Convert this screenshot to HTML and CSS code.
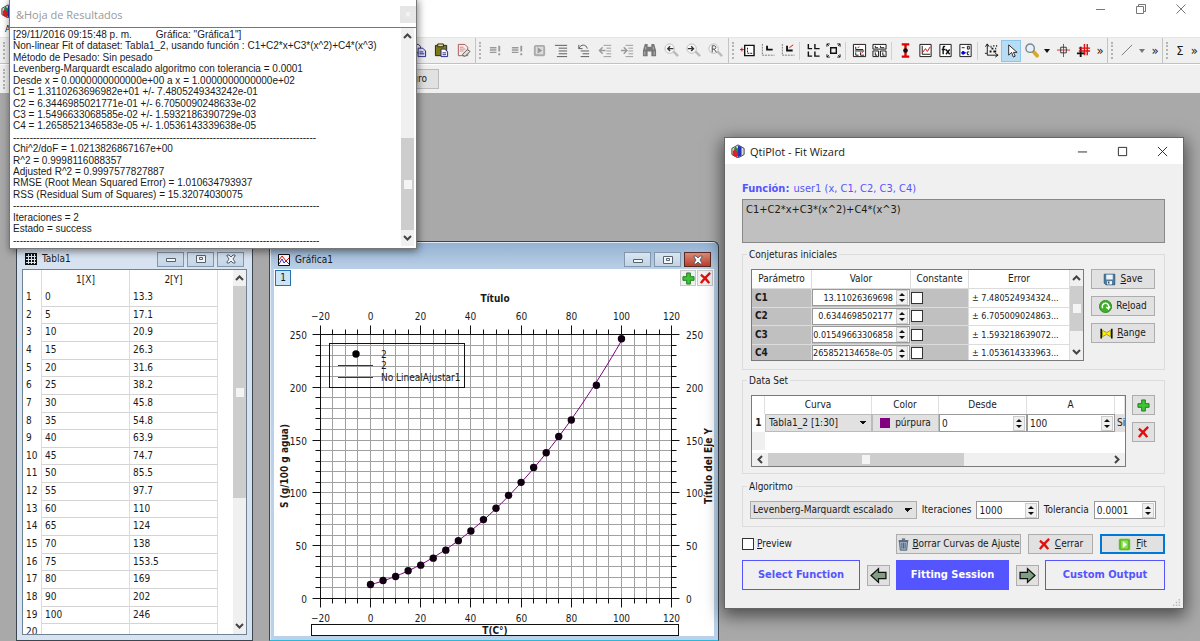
FILE: index.html
```html
<!DOCTYPE html>
<html lang="es">
<head>
<meta charset="utf-8">
<title>QtiPlot - Fit Wizard</title>
<link rel="stylesheet" href="styles.css">
</head>
<body>
<div class="app">
  <header class="app-title">
    <div class="app-brand">
      <svg class="logo" viewBox="0 0 16 16"><path d="M1 5l7-4 7 4v7l-7 4-7-4z" fill="#ddd" stroke="#333"/><path d="M2 8l3-2 3 2v6l-2 1-4-2z" fill="#d22"/><path d="M8 2l4 1v10l-4 2z" fill="#2233bb"/><path d="M3 6l2-3 3 2v4z" fill="#2a8a3a"/></svg>
      <span class="app-menu">A</span>
    </div>
    <div class="app-controls">
      <button aria-label="Minimizar"><svg viewBox="0 0 12 12"><path d="M1 6.500h9"/></svg></button>
      <button aria-label="Restaurar"><svg viewBox="0 0 12 12"><path d="M1.500 3.500h7v7h-7zM3.500 3.500v-2h7v7h-2"/></svg></button>
      <button aria-label="Cerrar"><svg viewBox="0 0 12 12"><path d="M1.500 1.500l9 9M10.500 1.500l-9 9"/></svg></button>
    </div>
  </header>

  <div class="toolbar">
    <div class="group group-edit">
      <span class="handle"></span>
      <span class="spring"></span>
      <button aria-label="Copiar"><svg viewBox="0 0 16 16"><path d="M1 1.500h6l2 2v7H1z" fill="#eef" stroke="#226"/><path d="M6.500 5.500h5l3 3v6h-8z" fill="#dde" stroke="#22228a"/><path d="M8 9.500h4M8 11.500h5" stroke="#22228a"/></svg></button>
      <button aria-label="Pegar"><svg viewBox="0 0 16 16"><path d="M1.500 2.500h12v11h-12z" fill="#7a7a1a" stroke="#222"/><path d="M4 1h6v3H4z" fill="#e8e070" stroke="#222"/><path d="M7.500 6.500h4l3 3v5h-7z" fill="#fff" stroke="#22228a"/><path d="M9 10.500h4M9 12.500h4" stroke="#22228a"/></svg></button>
      <button aria-label="Borrar"><svg viewBox="0 0 16 16"><path d="M2.500 1.500h7l3 3v9h-10z" fill="#fbeaea" stroke="#a55"/><path d="M4 4.500h4M4 6.500h6M4 8.500h4" stroke="#c88"/><path d="M7 12l5-5 3 2-5 5H8z" fill="#ddd" stroke="#555"/></svg></button>
    </div>
    <div class="group group-script">
      <span class="handle"></span>
      <button aria-label="Ejecutar línea"><svg class="dim" viewBox="0 0 16 16"><path d="M2 5h7M2 7.500h7M2 10h7" stroke-width="1.500"/><path d="M12 3v6M12 11v2" stroke-width="2"/></svg></button>
      <button aria-label="Ejecutar todo"><svg class="dim" viewBox="0 0 16 16"><path d="M2 5h7M2 7.500h7M2 10h7" stroke-width="1.500"/><path d="M12 3v6M12 11v2" stroke-width="2"/></svg></button>
      <button aria-label="Reproducir"><svg viewBox="0 0 16 16"><rect x="2" y="2" width="12" height="12" rx="2" fill="#aaa"/><rect x="4" y="4" width="8" height="8" fill="#ddd"/><path d="M6 4.500l5 3.500-5 3.500z" fill="#999"/></svg></button>
      <button aria-label="Comentar"><svg class="dark" viewBox="0 0 16 16"><path d="M1 2.500h13M5 5.500h9M5 8.500h9M5 11.500h9M3 14.500h11"/></svg></button>
      <button aria-label="Descomentar"><svg class="dark" viewBox="0 0 16 16"><path d="M3 2v4h4M3 6c2-5 8-5 9 0M5 8.500h9M7 11.500h7M5 14.500h9"/></svg></button>
      <button aria-label="Reducir sangría"><svg class="dim" viewBox="0 0 16 16"><path d="M6 2.500h8M9 5.500h5M9 8.500h5M9 11.500h5M6 14.500h8"/><path d="M5 4.500L1.500 8 5 11.500M2 8h6" stroke-width="1.500"/></svg></button>
      <button aria-label="Aumentar sangría"><svg class="dim" viewBox="0 0 16 16"><path d="M6 2.500h8M9 5.500h5M9 8.500h5M9 11.500h5M6 14.500h8"/><path d="M4 4.500L7.500 8 4 11.500M1 8h6" stroke-width="1.500"/></svg></button>
      <button aria-label="Buscar"><svg viewBox="0 0 16 16"><path d="M3 1h3v3h4V1h3l2 7v6h-5V9H6v5H1V8z" fill="#777"/><path d="M4 4v3M12 4v3M3 9v4M13 9v4" stroke="#bbb"/></svg></button>
      <button aria-label="Buscar anterior"><svg class="dim" viewBox="0 0 16 16"><circle cx="6" cy="6" r="5" fill="#f8f8f8" stroke="#bbb"/><path d="M10 9l5 5" stroke-width="2.500" stroke="#bbb"/><path d="M10 6H4M6.500 3.500L4 6l2.500 2.500" stroke="#333" stroke-width="1.500"/></svg></button>
      <button aria-label="Buscar siguiente"><svg class="dim" viewBox="0 0 16 16"><circle cx="6" cy="6" r="5" fill="#f8f8f8" stroke="#bbb"/><path d="M10 9l5 5" stroke-width="2.500" stroke="#bbb"/><path d="M2 6h6M5.500 3.500L8 6 5.500 8.500" stroke="#333" stroke-width="1.500"/></svg></button>
      <button aria-label="Reemplazar"><svg class="dim" viewBox="0 0 16 16"><circle cx="6" cy="6" r="5" fill="#f8f8f8" stroke="#bbb"/><path d="M10 9l5 5" stroke-width="2.500" stroke="#bbb"/><path d="M4.500 10V3H7a1.800 1.800 0 010 3.500H4.500M6.500 6.500L9 10" stroke="#444"/></svg></button>
    </div>
    <div class="group group-plot">
      <span class="handle"></span>
      <button aria-label="Añadir capa"><svg viewBox="0 0 16 16"><path d="M5 2.500h10v11H5z" fill="#fff" stroke="#111" stroke-width="1.500"/><path d="M8 5v6h5" fill="none" stroke="#111" stroke-dasharray="2 1"/><path d="M0 7h4M2 5v4" stroke="#d00"/></svg></button>
      <button aria-label="Capa izquierda"><svg class="ink" viewBox="0 0 16 16"><path d="M2.500 1v12h13" stroke="#777" stroke-dasharray="2 1"/><path d="M7.500 3v4h6" stroke-width="2"/></svg></button>
      <button aria-label="Capa derecha"><svg class="ink" viewBox="0 0 16 16"><path d="M2.500 1v12h13" stroke="#777" stroke-dasharray="2 1"/><path d="M7.500 3v5h6" stroke-width="2"/><path d="M10 5l4-3" stroke="#d00"/></svg></button>
      <i class="sep"></i>
      <button aria-label="Organizar capas"><svg class="ink" viewBox="0 0 16 16"><path d="M2.500 1v5h4M9.500 1v5h5M2.500 9v5h4M9.500 9v5h5" stroke-width="1.500"/></svg></button>
      <button aria-label="Ajustar tamaño"><svg class="ink" viewBox="0 0 16 16"><path d="M5 5h6v6H5z" stroke-width="1.500"/><path d="M1 4V1h3M12 1h3v3M15 12v3h-3M4 15H1v-3"/><path d="M1 1l2 2M15 1l-2 2M15 15l-2-2M1 15l2-2"/></svg></button>
      <i class="sep"></i>
      <button aria-label="Dos paneles"><svg class="ink" viewBox="0 0 16 16"><path d="M1.500 1.500h13v13h-13z" fill="#fff"/><path d="M4 4v3h8M4 10v3h3M9 10v3h4M3 8.500h10"/><path d="M6 5l2-1M10 11l2-2" stroke="#d00"/></svg></button>
      <button aria-label="Cuatro paneles"><svg class="ink" viewBox="0 0 16 16"><path d="M1 1.500h14v5H1zM1 8.500h6v6H1zM9 8.500h6v6H9z" fill="#fff"/><path d="M3.500 3v2h3M9 3v2h4M3.500 10v3h2M11.500 10v3h2"/></svg></button>
      <i class="sep"></i>
      <button aria-label="Barras de error"><svg viewBox="0 0 16 16"><path d="M4 1.500h8M4 14.500h8M8 1v14" stroke="#e00000" stroke-width="2.500"/><circle cx="8" cy="8" r="2.500" fill="#111"/></svg></button>
      <button aria-label="Curvas"><svg class="ink" viewBox="0 0 16 16"><path d="M2 1.500h12v13H2z" fill="#fff"/><path d="M4.500 3v9H13"/><path d="M5 10l3-4 2 3 3-5" stroke="#d00"/></svg></button>
      <button aria-label="Función"><svg class="ink" viewBox="0 0 16 16"><path d="M2 1.500h12v13H2z" fill="#fff"/><path d="M7.500 4c-2-1-2 1-2 3v5M4 7h4M8.500 7l4 5M12.500 7l-4 5" stroke-width="1.500"/></svg></button>
      <button aria-label="Leyenda"><svg class="ink" viewBox="0 0 16 16"><path d="M2 1.500h12v13H2z" fill="#fff"/><path d="M4 5h3M10 3.500h2v3h-2zM12 9.500h-2v3h2"/><circle cx="5.500" cy="10.500" r="1.500" fill="#00d" stroke="#00d"/><path d="M4 10.500h5" stroke="#00d"/></svg></button>
      <i class="sep"></i>
      <button aria-label="Seleccionar datos"><svg class="ink" viewBox="0 0 16 16"><path d="M3.500 1v12H15M1.500 4l2-3 2 3M12 11l3 2-3 2M1 11h2"/><path d="M7 4h1M10 3h1M8 6h2M12 6h1M6 9h2M10 9h3M13 3h1" stroke-width="2"/></svg></button>
      <button class="active" aria-label="Puntero"><svg viewBox="0 0 16 16"><path d="M5 2v11l3-3 2 5 2-1-2-4h4z" fill="#fff" stroke="#222"/></svg></button>
      <button aria-label="Ampliar"><svg viewBox="0 0 16 16"><path d="M10 9l4 4.500" stroke="#d8a928" stroke-width="4" stroke-linecap="round"/><circle cx="6.500" cy="5.500" r="4.500" fill="#e4f0fa" stroke="#7d8790" stroke-width="1.500"/></svg></button>
      <span class="caret"></span>
      <button aria-label="Lector de datos"><svg viewBox="0 0 16 16"><path d="M8 1v14M1 7.500h14" stroke="#d22"/><path d="M5 4.500h6v6H5z" fill="none" stroke="#333"/></svg></button>
      <button aria-label="Lector de pantalla"><svg viewBox="0 0 16 16"><path d="M5 4v11M1 11h9" stroke="#111" stroke-width="2"/><path d="M9 1v12M12 1v12M3 5.500h12M3 8.500h12" stroke="#d11" stroke-width="1.500"/></svg></button>
      <span class="more">»</span>
    </div>
    <div class="group">
      <span class="handle"></span>
      <button aria-label="Línea"><svg viewBox="0 0 16 16"><path d="M3 13L14 2" stroke="#777"/></svg></button>
      <span class="caret soft"></span>
      <span class="more">»</span>
    </div>
    <div class="group group-stats">
      <span class="handle"></span>
      <button class="sigma" aria-label="Estadísticas">Σ</button>
      <span class="more">»</span>
    </div>
  </div>

  <div class="toolbar format-bar">
    <span class="handle"></span>
    <button class="color-name">Negro</button>
  </div>

  <main class="desktop"></main>

  <section class="sub-window table-window">
    <header class="sub-title">
      <svg class="sub-icon" viewBox="0 0 12 12"><path d="M0 0h12v12H0z" fill="#111"/><path d="M1 3.500h10M1 6.500h10M1 9.500h10M3.500 1v10M6.500 1v10M9.500 1v10" stroke="#dde6f0"/></svg>
      <h2>Tabla1</h2>
      <button aria-label="Minimizar"><svg viewBox="0 0 12 10"><path d="M1.500 4.500h9v3h-9z"/></svg></button>
      <button aria-label="Maximizar"><svg viewBox="0 0 12 10"><path d="M1.500 1.500h9v7h-9zM4.500 3.500h3v2h-3z"/></svg></button>
      <button aria-label="Cerrar"><svg viewBox="0 0 12 10"><path d="M2 1h2l2 2 2-2h2v1L8 5l2 3v1H8L6 7 4 9H2V8l2-3-2-3z"/></svg></button>
    </header>
    <div class="sheet">
      <table class="data">
        <thead><tr><th></th><th>1[X]</th><th>2[Y]</th></tr></thead>
        <tbody>
          <tr><th>1</th><td>0</td><td>13.3</td></tr>
          <tr><th>2</th><td>5</td><td>17.1</td></tr>
          <tr><th>3</th><td>10</td><td>20.9</td></tr>
          <tr><th>4</th><td>15</td><td>26.3</td></tr>
          <tr><th>5</th><td>20</td><td>31.6</td></tr>
          <tr><th>6</th><td>25</td><td>38.2</td></tr>
          <tr><th>7</th><td>30</td><td>45.8</td></tr>
          <tr><th>8</th><td>35</td><td>54.8</td></tr>
          <tr><th>9</th><td>40</td><td>63.9</td></tr>
          <tr><th>10</th><td>45</td><td>74.7</td></tr>
          <tr><th>11</th><td>50</td><td>85.5</td></tr>
          <tr><th>12</th><td>55</td><td>97.7</td></tr>
          <tr><th>13</th><td>60</td><td>110</td></tr>
          <tr><th>14</th><td>65</td><td>124</td></tr>
          <tr><th>15</th><td>70</td><td>138</td></tr>
          <tr><th>16</th><td>75</td><td>153.5</td></tr>
          <tr><th>17</th><td>80</td><td>169</td></tr>
          <tr><th>18</th><td>90</td><td>202</td></tr>
          <tr><th>19</th><td>100</td><td>246</td></tr>
          <tr><th>20</th><td></td><td></td></tr>
        </tbody>
      </table>
      <div class="scroll"><svg viewBox="0 0 9 6"><path d="M1 5l3.500-3.500L8 5"/></svg><div class="track"><span class="thumb thumb-sheet"><b></b></span></div><svg viewBox="0 0 9 6"><path d="M1 1l3.500 3.500L8 1"/></svg></div>
    </div>
  </section>

  <section class="sub-window graph-window">
    <header class="sub-title">
      <svg class="sub-icon" viewBox="0 0 12 12"><path d="M.5.500h11v11H.5z" fill="#fff" stroke="#111"/><path d="M1 6l3-4 4 5 3-3" fill="none" stroke="#d11"/><path d="M1 10l3-5 2 4 2-2 3 3" fill="none" stroke="#33b"/></svg>
      <h2>Gráfica1</h2>
      <button aria-label="Minimizar"><svg viewBox="0 0 12 10"><path d="M1.500 4.500h9v3h-9z"/></svg></button>
      <button aria-label="Maximizar"><svg viewBox="0 0 12 10"><path d="M1.500 1.500h9v7h-9zM4.500 3.500h3v2h-3z"/></svg></button>
      <button class="danger" aria-label="Cerrar"><svg viewBox="0 0 12 10"><path d="M2 1h2l2 2 2-2h2v1L8 5l2 3v1H8L6 7 4 9H2V8l2-3-2-3z"/></svg></button>
    </header>
    <div class="graph">
      <div class="layers">
        <button class="layer">1</button>
        <button class="tool" aria-label="Añadir capa"><svg viewBox="0 0 14 14"><path d="M5 1h4v4h4v4H9v4H5V9H1V5h4z" fill="#3cc433" stroke="#1c7a1c"/></svg></button>
        <button class="tool" aria-label="Eliminar capa"><svg viewBox="0 0 14 14"><path d="M2 3c3 2 7 6 9 9M12 1C9 4 5 8 2 12" fill="none" stroke="#e01010" stroke-width="2.500"/></svg></button>
      </div>
      <svg class="chart" id="chart" viewBox="0 0 440 349" role="img" aria-label="Título"></svg>
    </div>
  </section>

  <section class="results">
    <header class="results-title"><h2>&amp;Hoja de Resultados</h2><button aria-label="Cerrar">×</button></header>
    <div class="results-body">
      <div class="log">
        <p>[29/11/2016 09:15:48 p. m.<span class="tab"></span>Gráfica: "Gráfica1"]</p>
        <p>Non-linear Fit of dataset: Tabla1_2, usando función : C1+C2*x+C3*(x^2)+C4*(x^3)</p>
        <p>Método de Pesado: Sin pesado</p>
        <p>Levenberg-Marquardt escalado algoritmo con tolerancia = 0.0001</p>
        <p>Desde x = 0.0000000000000e+00 a x = 1.0000000000000e+02</p>
        <p>C1 = 1.3110263696982e+01 +/- 7.4805249343242e-01</p>
        <p>C2 = 6.3446985021771e-01 +/- 6.7050090248633e-02</p>
        <p>C3 = 1.5496633068585e-02 +/- 1.5932186390729e-03</p>
        <p>C4 = 1.2658521346583e-05 +/- 1.0536143339638e-05</p>
        <p>-------------------------------------------------------------------------------------------</p>
        <p>Chi^2/doF = 1.0213826867167e+00</p>
        <p>R^2 = 0.9998116088357</p>
        <p>Adjusted R^2 = 0.9997577827887</p>
        <p>RMSE (Root Mean Squared Error) = 1.010634793937</p>
        <p>RSS (Residual Sum of Squares) = 15.32074030075</p>
        <p>--------------------------------------------------------------------------------------------</p>
        <p>Iteraciones = 2</p>
        <p>Estado = success</p>
        <p>--------------------------------------------------------------------------------------------</p>
      </div>
      <div class="scroll"><svg viewBox="0 0 9 6"><path d="M1 5l3.500-3.500L8 5"/></svg><div class="track track-end"><span class="thumb thumb-log"><b></b></span></div><svg viewBox="0 0 9 6"><path d="M1 1l3.500 3.500L8 1"/></svg></div>
    </div>
  </section>

  <section class="wizard" role="dialog" aria-label="QtiPlot - Fit Wizard">
    <header class="wizard-title">
      <svg class="logo" viewBox="0 0 16 16"><path d="M1 5l7-4 7 4v7l-7 4-7-4z" fill="#ddd" stroke="#333"/><path d="M2 8l3-2 3 2v6l-2 1-4-2z" fill="#d22"/><path d="M8 2l4 1v10l-4 2z" fill="#2233bb"/><path d="M3 6l2-3 3 2v4z" fill="#2a8a3a"/></svg>
      <h1>QtiPlot - Fit Wizard</h1>
      <button aria-label="Minimizar"><svg viewBox="0 0 12 12"><path d="M1 6.500h10"/></svg></button>
      <button aria-label="Maximizar"><svg viewBox="0 0 12 12"><path d="M1.500 1.500h9v9h-9z"/></svg></button>
      <button aria-label="Cerrar"><svg viewBox="0 0 12 12"><path d="M1 1l10 10M11 1L1 11"/></svg></button>
    </header>
    <div class="wizard-body">
      <p class="function"><strong>Función:</strong> <span>user1 (x, C1, C2, C3, C4)</span></p>
      <textarea class="formula" aria-label="Función" readonly>C1+C2*x+C3*(x^2)+C4*(x^3)</textarea>

      <div class="box box-guess" role="group" aria-labelledby="lg-guess">
        <h3 id="lg-guess">Conjeturas iniciales</h3>
        <div class="grid-frame guess-frame">
          <table class="guess">
            <thead><tr><th>Parámetro</th><th>Valor</th><th>Constante</th><th>Error</th></tr></thead>
            <tbody>
              <tr><th>C1</th><td><span class="spin"><input class="num" aria-label="C1" value="13.11026369698"><i class="arrows"></i></span></td><td><input type="checkbox" aria-label="C1 constante"></td><td class="err">± 7.480524934324...</td></tr>
              <tr><th>C2</th><td><span class="spin"><input class="num" aria-label="C2" value="0.6344698502177"><i class="arrows"></i></span></td><td><input type="checkbox" aria-label="C2 constante"></td><td class="err">± 6.705009024863...</td></tr>
              <tr><th>C3</th><td><span class="spin"><input class="num" dir="rtl" aria-label="C3" value="0.01549663306858"><i class="arrows"></i></span></td><td><input type="checkbox" aria-label="C3 constante"></td><td class="err">± 1.593218639072...</td></tr>
              <tr><th>C4</th><td><span class="spin"><input class="num" dir="rtl" aria-label="C4" value="1.265852134658e-05"><i class="arrows"></i></span></td><td><input type="checkbox" aria-label="C4 constante"></td><td class="err">± 1.053614333963...</td></tr>
            </tbody>
          </table>
          <div class="scroll"><svg viewBox="0 0 9 6"><path d="M1 5l3.500-3.500L8 5"/></svg><div class="track"><span class="thumb thumb-guess"><b></b></span></div><svg viewBox="0 0 9 6"><path d="M1 1l3.500 3.500L8 1"/></svg></div>
        </div>
        <div class="side">
          <button class="btn"><svg viewBox="0 0 16 16"><path d="M1.500 1.500h13v13h-11l-2-2z" fill="#4b7fa8" stroke="#2b4f70"/><path d="M4 2h8v6H4z" fill="#eef4f8"/><path d="M5 10h6v4H5z" fill="#fff"/><path d="M6 10.500h2V13H6z" fill="#345"/></svg><span><u>S</u>ave</span></button>
          <button class="btn"><svg viewBox="0 0 16 16"><circle cx="8" cy="8" r="7.500" fill="#3fb028" stroke="#237a14"/><path d="M4.500 10a4 4 0 117 0M9 8.500l2.500 2.500 2-3" fill="none" stroke="#fff" stroke-width="1.800"/></svg><span>Re<u>l</u>oad</span></button>
          <button class="btn"><svg viewBox="0 0 16 16"><path d="M1.500 2v12M14.500 2v12" stroke="#111" stroke-width="2"/><path d="M3 4l5 3 5-3v8L8 9l-5 3z" fill="#ffee00" stroke="#998c00"/></svg><span><u>R</u>ange</span></button>
        </div>
      </div>

      <div class="box box-data" role="group" aria-labelledby="lg-data">
        <h3 id="lg-data">Data Set</h3>
        <div class="grid-frame set-frame">
          <table class="sets">
            <thead><tr><th></th><th>Curva</th><th>Color</th><th>Desde</th><th>A</th><th></th></tr></thead>
            <tbody>
              <tr><th>1</th>
                <td><select aria-label="Curva"><option>Tabla1_2 [1:30]</option></select></td>
                <td><button class="swatch"><i></i>púrpura</button></td>
                <td><span class="spin"><input aria-label="Desde" value="0"><i class="arrows"></i></span></td>
                <td><span class="spin"><input aria-label="A" value="100"><i class="arrows"></i></span></td>
                <td class="cut">Si</td></tr>
              <tr class="empty"><th></th><td></td></tr>
            </tbody>
          </table>
          <div class="scroll scroll-x"><svg viewBox="0 0 6 9"><path d="M5 1L1.500 4.500 5 8"/></svg><div class="track"><span class="thumb thumb-sets"><b></b></span></div><svg viewBox="0 0 6 9"><path d="M1 1l3.500 3.500L1 8"/></svg></div>
        </div>
        <div class="side side-small">
          <button class="btn" aria-label="Añadir"><svg viewBox="0 0 14 14"><path d="M5 1h4v4h4v4H9v4H5V9H1V5h4z" fill="#3cc433" stroke="#1c7a1c"/></svg></button>
          <button class="btn" aria-label="Quitar"><svg viewBox="0 0 14 14"><path d="M2 3c3 2 7 6 9 9M12 1C9 4 5 8 2 12" fill="none" stroke="#e01010" stroke-width="2.500"/></svg></button>
        </div>
      </div>

      <div class="box box-algo" role="group" aria-labelledby="lg-algo">
        <h3 id="lg-algo">Algoritmo</h3>
        <select class="algo" aria-label="Algoritmo"><option>Levenberg-Marquardt escalado</option></select>
        <label for="iter">Iteraciones</label>
        <span class="spin framed"><input id="iter" value="1000"><i class="arrows"></i></span>
        <label for="tol">Tolerancia</label>
        <span class="spin framed"><input id="tol" value="0.0001"><i class="arrows"></i></span>
      </div>

      <div class="actions">
        <label class="preview"><input type="checkbox"><span><u>P</u>review</span></label>
        <button class="btn btn-clear"><svg viewBox="0 0 16 16"><path d="M3 4h10l-1 11H4z" fill="#9db0c4" stroke="#44546a"/><path d="M2 3.500h12M6 1.500h4" stroke="#44546a" stroke-width="1.500"/><path d="M6 6v7M8 6v7M10 6v7" stroke="#44546a"/></svg><span><u>B</u>orrar Curvas de Ajuste</span></button>
        <button class="btn btn-close"><svg viewBox="0 0 14 14"><path d="M2 3c3 2 7 6 9 9M12 1C9 4 5 8 2 12" fill="none" stroke="#e01010" stroke-width="2.500"/></svg><span><u>C</u>errar</span></button>
        <button class="btn btn-fit"><svg viewBox="0 0 16 16"><rect x="1" y="1" width="14" height="14" rx="2" fill="#5cc020"/><rect x="4" y="3" width="8" height="10" rx="1" fill="#8fe05a"/><path d="M6 4l5 4-5 4z" fill="#fff"/></svg><span><u>F</u>it</span></button>
      </div>
      <nav class="steps">
        <button class="step step-first">Select Function</button>
        <button class="btn nav" aria-label="Anterior"><svg viewBox="0 0 16 16"><path d="M1 8l7-6.500V5h7v6H8v3.500z" fill="#7fa07f" stroke="#111" stroke-width="1.200"/></svg></button>
        <button class="step current">Fitting Session</button>
        <button class="btn nav" aria-label="Siguiente"><svg viewBox="0 0 16 16"><path d="M15 8L8 1.500V5H1v6h7v3.500z" fill="#7fa07f" stroke="#111" stroke-width="1.200"/></svg></button>
        <button class="step step-last">Custom Output</button>
      </nav>
      <svg class="grip" viewBox="0 0 10 10"><path d="M8 0h2v2H8zM4 4h2v2H4zM8 4h2v2H8zM0 8h2v2H0zM4 8h2v2H4zM8 8h2v2H8z" fill="#bbb"/></svg>
    </div>
  </section>
</div>
<script src="chart.js"></script>
</body>
</html>
```

FILE: styles.css
```css
:root {
  --ui: "DejaVu Sans Condensed", "DejaVu Sans", "Noto Sans", sans-serif;
  --face: #f0f0f0;
  --button: #e1e1e1;
  --line: #adadad;
  --accent: #5555ff;
}

* { box-sizing: border-box; }

body {
  margin: 0;
  background: #a9a9a9;
  color: #1a1a1a;
  font: 9px/12px var(--ui);
}

h1, h2, h3, p { margin: 0; font-size: 10px; font-weight: normal; }
button, input, select, textarea { font: inherit; color: inherit; margin: 0; padding: 0; border-radius: 0; }
button { border: 0; background: none; }
u { text-underline-offset: 1px; }

.app { position: relative; display: flex; flex-direction: column; height: 100vh; overflow: hidden; }
.logo { width: 14px; height: 14px; flex: none; }

/* Main window */
.app-title { display: flex; justify-content: space-between; height: 37px; background: #fff; }
.app-brand { display: flex; flex-direction: column; gap: 5px; padding: 4px 0 0 1px; }
.app-menu { padding-left: 4px; }
.app-controls { display: flex; gap: 28px; align-items: center; height: 18px; padding-right: 13px; }
.app-controls svg { display: block; width: 12px; height: 12px; fill: none; stroke: #777; }

.toolbar { display: flex; align-items: stretch; height: 27px; background: var(--face); border-top: 1px solid #e4e4e4; border-bottom: 1px solid #c2c2c2; }
.group { display: flex; align-items: center; border-left: 1px solid #c4c4c4; }
.group-edit { width: 475px; border-left: 0; padding-right: 1px; }
.group-script { padding-right: 2px; }
.group-stats { flex: 1; overflow: hidden; }
.spring { flex: 1; }
.toolbar button { display: flex; align-items: center; justify-content: center; width: 20px; height: 22px; }
.toolbar .group-script button, .toolbar .group-edit button { width: 22px; }
.toolbar svg { width: 15px; height: 15px; flex: none; fill: none; }
.toolbar .dim { stroke: #999; }
.toolbar .dark { stroke: #555; }
.toolbar .ink { stroke: #111; }
.toolbar .active { background: #b9dcf5; border: 1px solid #8cc4ec; }
.handle { flex: none; width: 2px; margin: 4px 3px; align-self: stretch; border-left: 2px dotted #b4b4b4; }
.sep { width: 1px; height: 18px; margin: 0 3px 0 2px; background: #d0d0d0; }
.caret { display: flex; justify-content: center; width: 12px; color: #111; }
.caret::before { content: ""; border: 3px solid transparent; border-top: 4px solid; border-top-color: currentColor; border-bottom: 0; }
.caret.soft { color: #777; }
.more { width: 14px; text-align: center; font-size: 13px; }
.toolbar .sigma { width: 22px; font-size: 13px; }
.format-bar { height: 29px; align-items: center; border-top-color: #fff; border-bottom: 0; }
.toolbar .color-name { justify-content: flex-end; width: 60px; height: 20px; margin-left: 371px; padding-right: 11px; background: var(--button); border: 1px solid #bbb; font-size: 10px; }
.desktop { flex: 1; background: #a9a9a9; }

/* Scroll bars */
.scroll { display: flex; flex-direction: column; align-items: center; flex: none; width: 13px; background: var(--face); }
.scroll svg { flex: none; width: 9px; height: 6px; margin: 5px 0; fill: none; stroke: #444; stroke-width: 2; }
.track { display: flex; flex-direction: column; flex: 1; align-self: stretch; }
.track-end { justify-content: flex-end; }
.thumb { display: flex; align-items: center; justify-content: center; background: #cdcdcd; }
.thumb b { width: 8px; height: 9px; background: #f4f4f4; }
.thumb-sheet { height: 212px; }
.thumb-log { height: 92px; }
.thumb-guess { height: 45px; }
.scroll-x { flex-direction: row; width: auto; height: 13px; }
.scroll-x svg { width: 6px; height: 9px; margin: 0 5px; }
.scroll-x .track { flex-direction: row; }
.thumb-sets { width: 196px; }

/* Inner windows */
.sub-window { position: absolute; display: flex; flex-direction: column; border: 1px solid #3c4650; }
.sub-title { display: flex; align-items: center; gap: 3px; height: 20px; flex: none; }
.sub-title h2 { flex: 1; }
.sub-icon { width: 12px; height: 12px; margin-right: 2px; }
.sub-title button { display: flex; align-items: center; justify-content: center; width: 27px; height: 15px; border: 1px solid #8296ac; background: linear-gradient(#d9e5f1, #c3d4e6); }
.sub-title button svg { width: 12px; height: 10px; fill: #f4f8fb; stroke: #56636f; }
.sub-title .danger { background: linear-gradient(#dc8a78, #b8402c); border-color: #5a2a22; }
.sub-title .danger svg { fill: #fff; }
.table-window { left: 16px; top: 240px; width: 237px; height: 401px; padding: 8px 5px 5px; background: #d7e3f0; }
.table-window .sub-title { padding: 0 3px; }
.sheet { display: flex; flex: 1; min-height: 0; overflow: hidden; border: 1px solid #6f8294; background: #fff; }
.data { display: block; flex: 1; border-spacing: 0; font-size: 10px; line-height: 12px; }
.data thead { display: block; }
.data tr { display: grid; grid-template-columns: 19px 88px 88px; }
.data th, .data td { font-weight: normal; padding: 2px 3px; text-align: left; border-right: 1px solid #dcdcdc; }
.data thead th { text-align: center; height: 19px; padding-top: 4px; }
.data tbody { display: grid; grid-auto-rows: 1fr; height: 353px; }
.data tbody td { border-bottom: 1px solid #d4d4d4; }

.graph-window { left: 269px; top: 241px; width: 450px; height: 400px; padding: 8px 4px 4px; background: linear-gradient(#93b1d1, #bcd1e8 28px, #b9d1ea); border-bottom-color: #28b8d8; border-radius: 0 6px 0 0; box-shadow: inset 1px 1px 0 #dfeaf6; }
.graph-window .sub-title { height: 19px; padding: 0 3px 0 4px; }
.graph { flex: 1; background: #fff; }
.layers { display: flex; gap: 1px; height: 18px; padding: 1px 1px 0; }
.layers button { display: flex; align-items: center; justify-content: center; width: 16px; height: 16px; background: var(--face); border: 1px solid #c8c8c8; font-size: 10px; }
.layers svg { flex: none; width: 13px; height: 13px; }
.layers .layer { margin-right: auto; background: #cce4f7; border-color: #2672b0; }
.chart { display: block; width: 100%; }
.chart text { font: 10px var(--ui); fill: #1a1a1a; }
.chart .strong { font-weight: bold; }
.grid { stroke: #a0a0a0; }
.axis { stroke: #111; fill: none; }
.fit { stroke: #800080; fill: none; }

/* Results log */
.results { position: absolute; left: 9px; top: -2px; width: 408px; display: flex; flex-direction: column; background: #fff; border: 1px solid #777; box-shadow: 1px 2px 8px rgba(0, 0, 0, .5); }
.results-title { display: flex; align-items: center; justify-content: space-between; height: 29px; padding: 2px 0 0 6px; color: #999; border-bottom: 1px solid #777; }
.results-title h2 { font: 11px "Open Sans", "Noto Sans", sans-serif; }
.results-title button { width: 16px; height: 17px; background: #e6e6e6; color: #fff; }
.results-body { display: flex; height: 220px; padding: 0 2px 2px 3px; }
.log { flex: 1; display: grid; grid-auto-rows: 1fr; padding-top: 1px; overflow: hidden; white-space: nowrap; }
.log p { font: 10px/11px "Liberation Sans", Arial, sans-serif; }
.tab { display: inline-block; width: 24px; }

/* Fit wizard */
.wizard { position: absolute; left: 724px; top: 137px; width: 460px; background: var(--face); border: 1px solid #666; box-shadow: 0 5px 16px 2px rgba(0, 0, 0, .55); }
.wizard-title { display: flex; align-items: center; gap: 5px; height: 26px; padding: 0 15px 0 6px; background: #fff; }
.wizard-title h1 { flex: 1; font: 11px "Open Sans", "Noto Sans", sans-serif; }
.wizard-title button { width: 11px; height: 11px; margin-left: 24px; }
.wizard-title button svg { display: block; fill: none; stroke: #222; }
.wizard-body { position: relative; display: flex; flex-direction: column; padding: 17px 18px 18px 17px; }
.function { color: var(--accent); font-size: 11px; line-height: 15px; }
.function span { margin-left: 1px; }
.formula { display: block; width: 100%; height: 44px; margin-top: 3px; padding: 3px; resize: none; border: 1px solid #888; background: #c0c0c0; font-size: 11px; line-height: 14px; outline: 0; }

.box { position: relative; display: flex; border: 1px solid #dcdcdc; }
.box h3 { position: absolute; top: -6px; left: 4px; padding: 0 2px; background: var(--face); }
.box-guess { height: 116px; margin-top: 11px; padding: 14px 9px 8px 8px; gap: 7px; }
.box-data { height: 94px; margin-top: 10px; padding: 14px 9px 6px 8px; gap: 6px; }
.box-algo { height: 41px; margin-top: 12px; padding: 13px 8px 6px 7px; align-items: center; gap: 5px; }
.grid-frame { display: flex; flex: 1; min-width: 0; overflow: hidden; border: 1px solid #7a7a7a; background: #fff; }
.set-frame { flex-direction: column; }
table { border-collapse: collapse; table-layout: fixed; }
.guess { flex: 1; display: block; }
.guess thead, .guess tbody { display: block; }
.guess tr { display: grid; grid-template-columns: 60px 99px 58px 1fr; height: 19px; }
.guess tbody { display: grid; grid-auto-rows: 1fr; height: 74px; }
.guess tbody tr { height: auto; }
.guess th, .guess td { display: flex; align-items: center; padding: 0; font-weight: normal; border-right: 1px solid #dcdcdc; border-bottom: 1px solid #dcdcdc; white-space: nowrap; overflow: hidden; }
.guess thead th, .sets thead th { justify-content: center; font-size: 10px; }
.guess tbody th { padding-left: 3px; font-weight: bold; font-size: 10px; background: #c0c0c0; }
.guess tbody td { background: #c0c0c0; }
.guess tbody .err { padding-left: 3px; background: #fff; }
.guess .spin { height: 17px; }

input[type="checkbox"] { appearance: none; width: 12px; height: 12px; border: 1px solid #333; background: #fff; }
.spin { display: flex; align-items: center; width: 100%; height: 18px; padding-right: 1px; border: 1px solid #999; background: #fff; }
.spin input { flex: 1; min-width: 0; width: 0; height: 15px; padding: 0 3px 0 2px; border: 0; background: none; outline: 0; }
.spin .num { text-align: right; padding-left: 0; }
.arrows { display: flex; flex-direction: column; align-items: center; justify-content: center; gap: 3px; width: 12px; height: 15px; background: var(--face); border: 1px solid #ccc; }
.arrows::before, .arrows::after { content: ""; border: 3px solid transparent; border-top: 0; border-bottom-color: #111; }
.arrows::after { border-top: 3px solid #111; border-bottom: 0; }
.framed { width: 63px; }

.side { display: flex; flex-direction: column; gap: 7px; width: 64px; }
.side-small { width: 23px; }
.btn { display: flex; align-items: center; justify-content: center; gap: 4px; height: 20px; background: var(--button); border: 1px solid var(--line); font-size: 10px; white-space: nowrap; }
.btn svg { flex: none; width: 13px; height: 13px; }

.sets, .sets thead, .sets tbody { display: block; }
.sets { flex: 1; font-size: 10px; }
.sets tr { display: grid; grid-template-columns: 13px 107px 67px 88px 88px 1fr; height: 18px; }
.sets th, .sets td { display: flex; align-items: center; padding: 0; font-weight: normal; overflow: hidden; }
.sets thead th { border-right: 1px solid #e0e0e0; }
.sets tbody th { justify-content: center; font-weight: bold; }
.sets select, .swatch { width: 100%; height: 18px; background: var(--button); border: 1px solid #bbb; }
.sets .empty th { background: var(--face); }
.swatch { display: flex; align-items: center; justify-content: center; gap: 5px; }
.swatch i { width: 10px; height: 10px; background: #800080; }
.sets .cut { padding-left: 2px; background: var(--button); }

select { appearance: none; padding: 0 3px; outline: 0; background: var(--button); border: 1px solid var(--line); }
select, .sets select {
  background-image: linear-gradient(45deg, transparent 50%, #111 50%), linear-gradient(-45deg, transparent 50%, #111 50%);
  background-size: 4px 4px;
  background-position: right 8px center, right 4px center;
  background-repeat: no-repeat;
}
select.algo { width: 169px; height: 18px; padding: 0 2px; font-size: 10px; }
.box-algo label, .box-algo .spin { font-size: 10px; }

.actions { display: flex; align-items: center; gap: 7px; margin-top: 7px; }
.preview { display: flex; align-items: center; gap: 3px; flex: 1; font-size: 10px; }
.btn-clear { width: 125px; gap: 2px; }
.btn-close { width: 65px; }
.btn-fit { width: 65px; border: 2px solid #0078d7; gap: 5px; }
.steps { display: flex; align-items: center; justify-content: space-between; margin-top: 6px; }
.step { height: 30px; border: 1px solid var(--accent); color: var(--accent); font-size: 11px; font-weight: bold; }
.step-first { width: 118px; }
.step-last { width: 120px; }
.current { width: 113px; background: var(--accent); color: #fff; }
.nav { width: 23px; height: 21px; }
.nav svg { width: 17px; height: 17px; }
.grip { position: absolute; right: 3px; bottom: 2px; width: 7px; height: 7px; }
```

FILE: chart.js
```js
const chart = document.getElementById("chart");
const points = [[0, 13.3], [5, 17.1], [10, 20.9], [15, 26.3], [20, 31.6], [25, 38.2], [30, 45.8], [35, 54.8], [40, 63.9], [45, 74.7], [50, 85.5], [55, 97.7], [60, 110], [65, 124], [70, 138], [75, 153.5], [80, 169], [90, 202], [100, 246]];
const fn = x => 13.11026 + 0.6344699 * x + 0.015496633 * x * x + 0.0000126585 * x ** 3;
const px = v => 96.5 + v * 2.51;
const py = v => 311.5 - v * 1.056;
const snap = v => Math.floor(v) + 0.5;
const left = snap(px(-20)), right = snap(px(120)), top0 = snap(py(250)), bottom = snap(py(0));
const parts = [];
const line = (cls, x1, y1, x2, y2) => parts.push(`<line class="${cls}" x1="${x1}" y1="${y1}" x2="${x2}" y2="${y2}"/>`);
const text = (x, y, s, anchor = "middle", cls = "", extra = "") => parts.push(`<text class="${cls}" x="${x}" y="${y}" text-anchor="${anchor}" ${extra}>${s}</text>`);

for (let v = -20; v <= 120; v += 5) {
  const x = snap(px(v)), major = v % 20 === 0, t = major ? 9 : 5;
  line("grid", x, top0, x, bottom);
  line("axis", x, top0 - t, x, top0);
  line("axis", x, bottom, x, bottom + t);
  if (major) {
    const label = v < 0 ? "−20" : v;
    text(x, 33, label);
    text(x, 335, label);
  }
}
for (let v = 0; v <= 250; v += 10) {
  const y = snap(py(v)), major = v % 50 === 0, t = major ? 8 : 5;
  line("grid", left, y, right, y);
  line("axis", left - t, y, left, y);
  line("axis", right, y, right + t, y);
  if (major) {
    text(33, y + 4, v, "end");
    text(412, y + 4, v, "start");
  }
}
parts.push(`<rect class="axis" x="${left}" y="${top0}" width="${right - left}" height="${bottom - top0}"/>`);

let d = "";
for (let x = 0; x <= 100; x += 2) d += `${x ? "L" : "M"}${px(x)} ${py(fn(x))}`;
parts.push(`<path class="fit" d="${d}"/>`);
points.forEach(([x, y]) => parts.push(`<circle cx="${px(x)}" cy="${py(y)}" r="3.7" fill="#110011"/>`));

parts.push('<rect class="axis" x="55.5" y="56.5" width="135" height="44"/>');
parts.push('<circle cx="82" cy="67" r="3.7"/>');
line("fit", 64, 78.5, 99, 78.5);
line("fit", 64, 90.5, 99, 90.5);
text(107, 71, "2", "start");
text(107, 82, "2", "start");
text(107, 94, "No LinealAjustar1", "start");

text(221, 15, "Título", "middle", "strong");
text(14, 179, "S (g/100 g agua)", "middle", "strong", 'transform="rotate(-90 14 179)"');
text(438, 179, "Título del Eje Y", "middle", "strong", 'transform="rotate(-90 438 179)"');
parts.push('<rect class="axis" x="37.500" y="337.500" width="367" height="11"/>');
text(221, 347, "T(C°)", "middle", "strong");
chart.innerHTML = parts.join("");
```
